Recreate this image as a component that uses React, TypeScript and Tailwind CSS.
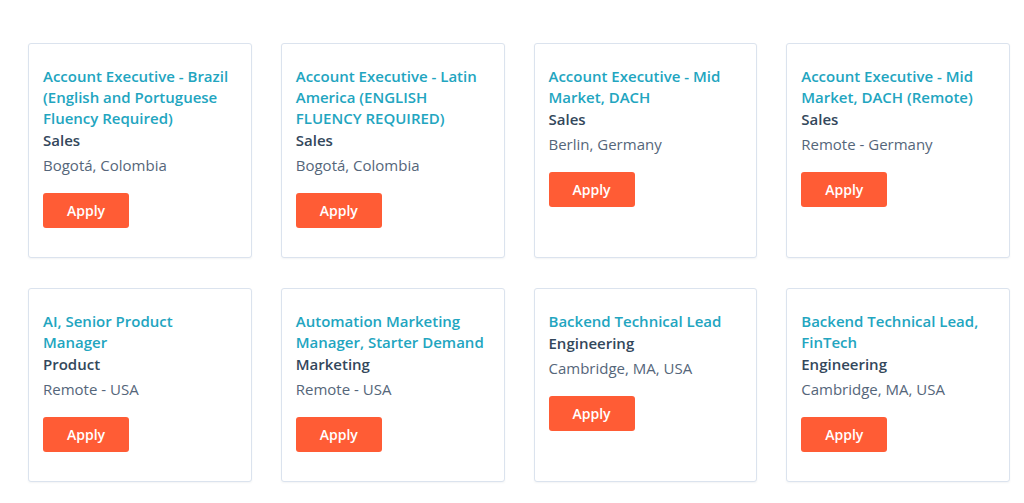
import React from "react";

type Job = {
    title: string;
    department: string;
    location: string;
};

const jobs: Job[] = [
    {
        title: "Account Executive - Brazil (English and Portuguese Fluency Required)",
        department: "Sales",
        location: "Bogotá, Colombia",
    },
    {
        title: "Account Executive - Latin America (ENGLISH FLUENCY REQUIRED)",
        department: "Sales",
        location: "Bogotá, Colombia",
    },
    { title: "Account Executive - Mid Market, DACH", department: "Sales", location: "Berlin, Germany" },
    {
        title: "Account Executive - Mid Market, DACH (Remote)",
        department: "Sales",
        location: "Remote - Germany",
    },
    { title: "AI, Senior Product Manager", department: "Product", location: "Remote - USA" },
    {
        title: "Automation Marketing Manager, Starter Demand",
        department: "Marketing",
        location: "Remote - USA",
    },
    { title: "Backend Technical Lead", department: "Engineering", location: "Cambridge, MA, USA" },
    { title: "Backend Technical Lead, FinTech", department: "Engineering", location: "Cambridge, MA, USA" },
];

function JobCard({ job }: { job: Job }) {
    return (
        <div className="flex flex-col items-start rounded-[3px] border border-[#dbe3ee] bg-white px-[14px] pt-[22px] pb-[29px] shadow-[0_1px_2px_rgba(45,62,80,0.06)]">
            <a href="#" className="text-[15px] leading-[21px] font-semibold text-[#22a5bf]">
                {job.title}
            </a>
            <p className="mt-[1px] text-[15px] leading-[21px] font-semibold text-[#33475b]">
                {job.department}
            </p>
            <p className="mt-[4px] text-[15px] leading-[21px] text-[#55667a]">{job.location}</p>
            <button className="mt-[17px] h-[35px] w-[86px] rounded-[3px] bg-[#ff5c35] text-[14px] font-semibold text-white">
                Apply
            </button>
        </div>
    );
}

export default function App() {
    return (
        <div className="min-h-[503px] bg-white font-['Open_Sans',sans-serif]">
            <div className="grid w-[1010px] grid-cols-4 gap-x-[29px] gap-y-[30px] pt-[43px] pl-[28px]">
                {jobs.map(job => (
                    <JobCard key={job.title} job={job} />
                ))}
            </div>
        </div>
    );
}
